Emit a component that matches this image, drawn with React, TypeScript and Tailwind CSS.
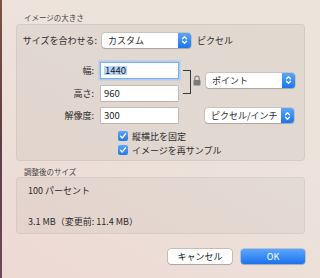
import React from 'react';

const font = { fontFamily: '"Noto Sans CJK JP", "Noto Sans", sans-serif' };

function Chevrons() {
    return (
        <svg width="7" height="10" viewBox="0 0 7 10" fill="none" stroke="white" strokeWidth="1.3" strokeLinecap="round" strokeLinejoin="round">
            <path d="M1.5 3.8 L3.5 1.8 L5.5 3.8" />
            <path d="M1.5 6.2 L3.5 8.2 L5.5 6.2" />
        </svg>
    );
}

function Popup({ label, width }: { label: string; width: string }) {
    return (
        <div className={`${width} h-[15px] flex items-stretch rounded-[3px] bg-white shadow-[0_0_0_0.5px_rgba(0,0,0,0.2),0_1px_1px_rgba(0,0,0,0.15)] overflow-hidden`}>
            <div className="flex-1 flex items-center pl-[6px] text-[9px] text-[#2b2b2b] leading-none">{label}</div>
            <div className="w-[13px] flex items-center justify-center bg-gradient-to-b from-[#5aa6fb] to-[#1b73f1]">
                <Chevrons />
            </div>
        </div>
    );
}

function Field({ label, value, focused }: { label: string; value: string; focused?: boolean }) {
    return (
        <div className="flex items-center">
            <div className="w-[80px] pr-[3px] text-right text-[9px] text-[#2b2b2b] leading-none">{label}</div>
            <div
                className={`w-[77px] h-[15px] ml-[4px] bg-white flex items-center pl-[3px] text-[9.5px] text-[#222] leading-none ${
                    focused
                        ? 'shadow-[0_0_0_1px_#7fb0ec,0_0_0_2.5px_#a9cbf3]'
                        : 'shadow-[0_0_0_0.5px_rgba(0,0,0,0.25),0_1px_0_rgba(0,0,0,0.05)]'
                }`}
            >
                {focused ? <span className="bg-[#b5d4fb] px-[1px]">{value}</span> : <span>{value}</span>}
            </div>
        </div>
    );
}

function Check({ label }: { label: string }) {
    return (
        <div className="flex items-center pl-[101px] h-[10px]">
            <div className="w-[10px] h-[10px] rounded-[2px] bg-gradient-to-b from-[#5aa6fb] to-[#2079f2] flex items-center justify-center">
                <svg width="8" height="8" viewBox="0 0 8 8" fill="none" stroke="white" strokeWidth="1.3" strokeLinecap="round" strokeLinejoin="round">
                    <path d="M1.5 4.3 L3.2 6 L6.5 1.8" />
                </svg>
            </div>
            <span className="ml-[4px] text-[9px] text-[#2b2b2b] leading-none">{label}</span>
        </div>
    );
}

function Lock() {
    return (
        <svg width="8" height="11" viewBox="0 0 8 11">
            <path d="M1.8 5 V3.2 A2.2 2.2 0 0 1 6.2 3.2 V5" fill="none" stroke="#7a7a7a" strokeWidth="1.1" />
            <rect x="0.5" y="5" width="7" height="5.5" rx="0.8" fill="#7a7a7a" />
        </svg>
    );
}

export default function App() {
    return (
        <div
            className="w-[320px] h-[278px] overflow-hidden flex bg-[linear-gradient(30deg,#eed9d3,#ece2db_55%,#ece4da)]"
            style={font}
        >
            {/* window edge */}
            <div className="w-[2px] h-full bg-gradient-to-b from-[#7a5440] via-[#5e3d45] to-[#6a4a5a]" />

            <div className="flex-1 flex flex-col pl-[14px] pr-[15px]">
                <div className="mt-[13px] h-[10px] pl-[8px] text-[7.5px] text-[#444] leading-[10px]">イメージの大きさ</div>

                {/* size panel */}
                <div className="mt-[1px] h-[137px] rounded-[4px] border border-black/[0.06] bg-black/[0.045] flex flex-col pt-[7px]">
                    <div className="flex items-center h-[16px]">
                        <div className="w-[80px] text-right text-[9px] text-[#2b2b2b] leading-none">サイズを合わせる:</div>
                        <div className="ml-[5px]">
                            <Popup label="カスタム" width="w-[89px]" />
                        </div>
                        <span className="ml-[6px] text-[9px] text-[#2b2b2b] leading-none">ピクセル</span>
                    </div>

                    <div className="mt-[15px] flex items-center">
                        <div className="flex flex-col gap-[8px]">
                            <Field label="幅:" value="1440" focused />
                            <Field label="高さ:" value="960" />
                        </div>
                        <div className="ml-[5px] w-[8px] h-[24px] border-t border-r border-b border-[#3a3a3a]" />
                        <div className="ml-[2px] mt-[-4px]">
                            <Lock />
                        </div>
                        <div className="ml-[5px] mt-[-4px]">
                            <Popup label="ポイント" width="w-[89px]" />
                        </div>
                    </div>

                    <div className="mt-[7px] flex items-center">
                        <Field label="解像度:" value="300" />
                        <div className="ml-[27px]">
                            <Popup label="ピクセル/インチ" width="w-[89px]" />
                        </div>
                    </div>

                    <div className="mt-[8px]">
                        <Check label="縦横比を固定" />
                    </div>
                    <div className="mt-[4px]">
                        <Check label="イメージを再サンプル" />
                    </div>
                </div>

                <div className="mt-[6px] h-[10px] pl-[8px] text-[7.5px] text-[#444] leading-[10px]">調整後のサイズ</div>

                {/* result panel */}
                <div className="h-[57px] rounded-[4px] border border-black/[0.05] bg-black/[0.035] flex flex-col pl-[11px] pt-[7px] text-[9px] text-[#2b2b2b]">
                    <div className="h-[12px] leading-[12px]">100 パーセント</div>
                    <div className="mt-[19px] h-[12px] leading-[12px]">3.1 MB（変更前: 11.4 MB）</div>
                </div>

                {/* buttons */}
                <div className="mt-[15px] flex justify-end gap-[9px]">
                    <button className="w-[64px] h-[15px] rounded-[3px] bg-white text-[9px] leading-none text-[#222] shadow-[0_0_0_0.5px_rgba(0,0,0,0.3),0_1px_1px_rgba(0,0,0,0.12)]">
                        キャンセル
                    </button>
                    <button className="w-[64px] h-[15px] rounded-[3px] bg-gradient-to-b from-[#5ba7fb] to-[#1a72f0] text-[9px] leading-none text-white shadow-[0_0_0_0.5px_rgba(0,60,180,0.4),0_1px_1px_rgba(0,0,0,0.12)]">
                        OK
                    </button>
                </div>
            </div>
        </div>
    );
}
